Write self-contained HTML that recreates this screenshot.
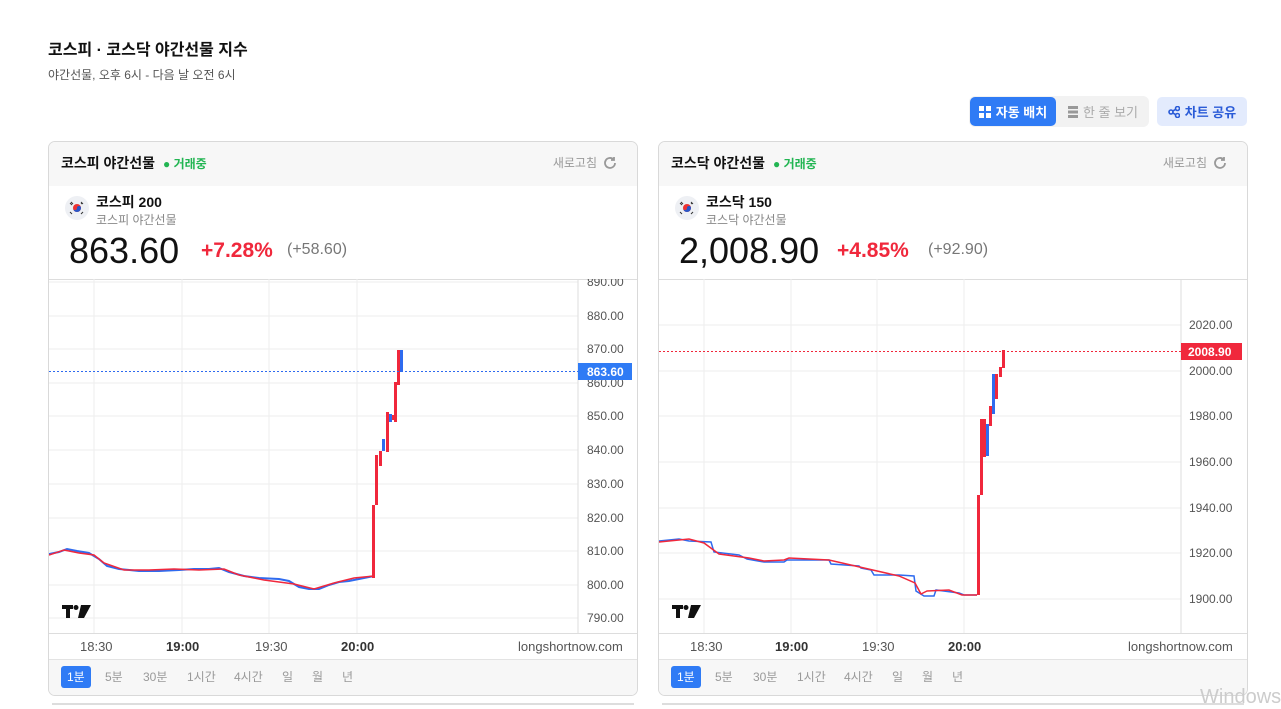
<!DOCTYPE html>
<html><head><meta charset="utf-8">
<style>
*{box-sizing:border-box;margin:0;padding:0}
body{width:1281px;height:705px;overflow:hidden;background:#fff;font-family:"Liberation Sans","Noto Sans CJK KR",sans-serif;position:relative;color:#111}
.abs{position:absolute}
h1{position:absolute;left:48px;top:36px;font-size:16px;font-weight:700}
.sub{left:48px;top:66px;font-size:12px;color:#555}
.btn{position:absolute;top:97px;height:29px;border-radius:5px;font-size:13px;display:flex;align-items:center;justify-content:center;gap:5px}
.card{position:absolute;top:141px;width:590px;height:555px;border:1px solid #d9d9d9;border-radius:7px;overflow:hidden;background:#fff}
.hd{position:absolute;left:0;top:0;right:0;height:44px;background:#f7f7f7}
.hd .t{position:absolute;left:12px;top:11px;font-size:14px;font-weight:700}
.hd .g{position:absolute;top:13px;font-size:12px;color:#22b552;font-weight:700}
.hd .r{position:absolute;right:20px;top:12px;font-size:12px;color:#999;display:flex;gap:6px;align-items:center}
.flag{position:absolute;left:16px;top:54px;width:24px;height:24px;border-radius:50%;background:#eef0f4}
.nm{position:absolute;left:47px;top:50px;font-size:14px;font-weight:700}
.nm2{position:absolute;left:47px;top:69px;font-size:12px;color:#888}
.big{position:absolute;left:20px;top:88px;font-size:36px;color:#111}
.pct{position:absolute;top:97px;font-size:21px;color:#f0283c;font-weight:700}
.chg{position:absolute;top:99px;font-size:16px;color:#777}
.tabs{position:absolute;left:0;right:0;bottom:0;height:36px;background:#f7f7f7;border-top:1px solid #e3e3e3}
.tab{position:absolute;top:6px;height:22px;font-size:12px;color:#999;line-height:22px}
.tab.on{background:#2f7bf5;color:#fff;border-radius:3px;padding:0 6px;left:12px}
svg text{font-family:"Liberation Sans",sans-serif}
</style></head><body>
<h1>코스피 · 코스닥 야간선물 지수</h1>
<div class="abs sub">야간선물, 오후 6시 - 다음 날 오전 6시</div>
<div class="abs" style="left:969px;top:96px;width:180px;height:31px;background:#f2f2f2;border-radius:6px"></div>
<div class="btn" style="left:970px;width:86px;background:#2f7bf5;color:#fff;font-weight:700"><svg width="12" height="12"><rect x="0" y="0" width="5" height="5" fill="#fff"/><rect x="7" y="0" width="5" height="5" fill="#fff"/><rect x="0" y="7" width="5" height="5" fill="#fff"/><rect x="7" y="7" width="5" height="5" fill="#fff"/></svg>자동 배치</div>
<div class="btn" style="left:1060px;width:86px;color:#aaa"><svg width="10" height="12"><rect y="0" width="10" height="3" fill="#999"/><rect y="4.5" width="10" height="3" fill="#999"/><rect y="9" width="10" height="3" fill="#999"/></svg>한 줄 보기</div>
<div class="btn" style="left:1157px;width:90px;background:#e3ebfd;color:#2a5bd7;font-weight:700"><svg width="12" height="12" fill="none" stroke="#2a5bd7" stroke-width="1.6"><circle cx="3" cy="6" r="2"/><circle cx="9.5" cy="2.5" r="2"/><circle cx="9.5" cy="9.5" r="2"/><path d="M4.8 5 7.8 3.3M4.8 7 7.8 8.7"/></svg>차트 공유</div>

<!-- LEFT CARD -->
<div class="card" style="left:48px">
 <div class="hd"><span class="t">코스피 야간선물</span><span class="g" style="left:114px">● 거래중</span><span class="r">새로고침 <svg width="14" height="14" fill="none" stroke="#999" stroke-width="1.8"><path d="M12 7a5 5 0 1 1-1.5-3.6"/><path d="M11 1v3h-3"/></svg></span></div>
 <div class="flag"><svg width="24" height="24"><circle cx="12" cy="12" r="4" fill="#e33"/><path d="M8 12a4 4 0 0 0 8 0a2 2 0 0 0-4 0a2 2 0 0 1-4 0" fill="#2856c8"/><g stroke="#333" stroke-width="1"><path d="M5 8l2-2M6 9l2-2M16 6l2 2M17 7l-1 1M5 16l2 2M16 18l2-2"/></g></svg></div>
 <div class="nm">코스피 200</div><div class="nm2">코스피 야간선물</div>
 <div class="big">863.60</div><div class="pct" style="left:152px">+7.28%</div><div class="chg" style="left:238px">(+58.60)</div>
 <svg class="abs" style="left:0;top:137px" width="590" height="383">
  <line x1="0" y1="0.5" x2="590" y2="0.5" stroke="#ddd"/>
  <g stroke="#eee"><line x1="45" y1="0" x2="45" y2="354"/><line x1="133" y1="0" x2="133" y2="354"/><line x1="220" y1="0" x2="220" y2="354"/><line x1="308" y1="0" x2="308" y2="354"/>
  <line x1="0" y1="3" x2="529" y2="3"/><line x1="0" y1="37" x2="529" y2="37"/><line x1="0" y1="70" x2="529" y2="70"/><line x1="0" y1="104" x2="529" y2="104"/><line x1="0" y1="137" x2="529" y2="137"/><line x1="0" y1="171" x2="529" y2="171"/><line x1="0" y1="205" x2="529" y2="205"/><line x1="0" y1="239" x2="529" y2="239"/><line x1="0" y1="272" x2="529" y2="272"/><line x1="0" y1="306" x2="529" y2="306"/><line x1="0" y1="339" x2="529" y2="339"/></g>
  <line x1="529" y1="0" x2="529" y2="354" stroke="#ddd"/><line x1="0" y1="354.5" x2="590" y2="354.5" stroke="#ddd"/>
  <g font-size="12" fill="#555"><text x="538" y="7">890.00</text><text x="538" y="41">880.00</text><text x="538" y="74">870.00</text><text x="538" y="108">860.00</text><text x="538" y="141">850.00</text><text x="538" y="175">840.00</text><text x="538" y="209">830.00</text><text x="538" y="243">820.00</text><text x="538" y="276">810.00</text><text x="538" y="310">800.00</text><text x="538" y="343">790.00</text></g>
  <polyline fill="none" stroke="#2f6bef" stroke-width="2" points="0,275 10,273 18,270 28,272 40,274 50,280 58,287 70,290 90,292 110,292 130,291 145,290 160,290 170,289 180,293 195,297 210,299 230,300 240,302 250,308 260,310 270,310 280,306 290,303 300,302 310,300 320,298 325,297"/>
  <polyline fill="none" stroke="#f0283c" stroke-width="1.5" points="0,276 15,271 30,274 45,276 55,284 75,291 100,291 125,290 150,291 175,290 190,296 215,301 245,305 265,310 285,304 305,299 325,297"/>
  <rect x="323" y="226" width="3" height="73" fill="#f0283c"/><rect x="326" y="176" width="3" height="50" fill="#f0283c"/><rect x="330" y="172" width="3" height="15" fill="#f0283c"/><rect x="333" y="160" width="3" height="12" fill="#2f6bef"/><rect x="337" y="133" width="3" height="40" fill="#f0283c"/><rect x="340" y="135" width="3" height="8" fill="#2f6bef"/><rect x="343" y="136" width="3" height="5" fill="#f0283c"/><rect x="345" y="103" width="3" height="40" fill="#f0283c"/><rect x="348" y="71" width="3" height="35" fill="#f0283c"/><rect x="351" y="71" width="3" height="22" fill="#2f6bef"/>
  <line x1="0" y1="92.5" x2="529" y2="92.5" stroke="#2f6bef" stroke-dasharray="2 2"/>
  <rect x="529" y="84" width="54" height="17" fill="#2f7bf5"/><text x="538" y="97" font-size="12" fill="#fff" font-weight="700">863.60</text>
  <g transform="translate(13,326)" fill="#111"><rect x="0" y="0" width="11" height="4"/><rect x="4" y="0" width="4" height="13"/><circle cx="14" cy="2.5" r="2.5"/><path d="M19 0h10l-7 13h-6z"/></g>
  <g font-size="13" fill="#555"><text x="31" y="372">18:30</text><text x="117" y="372" font-weight="700" fill="#333">19:00</text><text x="206" y="372">19:30</text><text x="292" y="372" font-weight="700" fill="#333">20:00</text><text x="469" y="372">longshortnow.com</text></g>
  <line x1="0" y1="382.5" x2="590" y2="382.5" stroke="#e3e3e3"/>
 </svg>
 <div class="tabs"><span class="tab on">1분</span><span class="tab" style="left:56px">5분</span><span class="tab" style="left:94px">30분</span><span class="tab" style="left:138px">1시간</span><span class="tab" style="left:185px">4시간</span><span class="tab" style="left:233px">일</span><span class="tab" style="left:263px">월</span><span class="tab" style="left:293px">년</span></div>
</div>
<div class="abs" style="left:52px;top:703px;width:582px;height:2px;background:#ddd"></div>

<!-- RIGHT CARD -->
<div class="card" style="left:658px">
 <div class="hd"><span class="t">코스닥 야간선물</span><span class="g" style="left:114px">● 거래중</span><span class="r">새로고침 <svg width="14" height="14" fill="none" stroke="#999" stroke-width="1.8"><path d="M12 7a5 5 0 1 1-1.5-3.6"/><path d="M11 1v3h-3"/></svg></span></div>
 <div class="flag"><svg width="24" height="24"><circle cx="12" cy="12" r="4" fill="#e33"/><path d="M8 12a4 4 0 0 0 8 0a2 2 0 0 0-4 0a2 2 0 0 1-4 0" fill="#2856c8"/><g stroke="#333" stroke-width="1"><path d="M5 8l2-2M6 9l2-2M16 6l2 2M17 7l-1 1M5 16l2 2M16 18l2-2"/></g></svg></div>
 <div class="nm">코스닥 150</div><div class="nm2">코스닥 야간선물</div>
 <div class="big">2,008.90</div><div class="pct" style="left:178px">+4.85%</div><div class="chg" style="left:269px">(+92.90)</div>
 <svg class="abs" style="left:0;top:137px" width="590" height="383">
  <line x1="0" y1="0.5" x2="590" y2="0.5" stroke="#ddd"/>
  <g stroke="#eee"><line x1="45" y1="0" x2="45" y2="354"/><line x1="132" y1="0" x2="132" y2="354"/><line x1="218" y1="0" x2="218" y2="354"/><line x1="305" y1="0" x2="305" y2="354"/>
  <line x1="0" y1="46" x2="522" y2="46"/><line x1="0" y1="92" x2="522" y2="92"/><line x1="0" y1="137" x2="522" y2="137"/><line x1="0" y1="183" x2="522" y2="183"/><line x1="0" y1="229" x2="522" y2="229"/><line x1="0" y1="274" x2="522" y2="274"/><line x1="0" y1="320" x2="522" y2="320"/></g>
  <line x1="522" y1="0" x2="522" y2="354" stroke="#ddd"/><line x1="0" y1="354.5" x2="590" y2="354.5" stroke="#ddd"/>
  <g font-size="12" fill="#555"><text x="530" y="50">2020.00</text><text x="530" y="96">2000.00</text><text x="530" y="141">1980.00</text><text x="530" y="187">1960.00</text><text x="530" y="233">1940.00</text><text x="530" y="278">1920.00</text><text x="530" y="324">1900.00</text></g>
  <polyline fill="none" stroke="#2f6bef" stroke-width="1.5" points="0,262 20,260 30,262 52,263 55,273 80,276 88,280 105,283 125,283 128,281 170,281 172,285 200,287 202,289 212,291 215,296 240,296 255,297 257,312 265,317 275,317 277,311 300,314 305,316 318,316"/>
  <polyline fill="none" stroke="#f0283c" stroke-width="1.5" points="0,263 30,260 45,264 60,275 90,279 105,282 125,281 130,279 170,281 205,289 240,297 256,304 262,315 268,312 290,311 303,316 318,316"/>
  <rect x="318" y="216" width="3" height="100" fill="#f0283c"/><rect x="321" y="140" width="3" height="76" fill="#f0283c"/><rect x="324" y="140" width="3" height="38" fill="#f0283c"/><rect x="327" y="145" width="3" height="32" fill="#2f6bef"/><rect x="330" y="127" width="3" height="20" fill="#f0283c"/><rect x="333" y="95" width="3" height="40" fill="#2f6bef"/><rect x="336" y="95" width="3" height="25" fill="#f0283c"/><rect x="340" y="88" width="3" height="10" fill="#f0283c"/><rect x="343" y="71" width="3" height="18" fill="#f0283c"/>
  <line x1="0" y1="72.5" x2="522" y2="72.5" stroke="#f0283c" stroke-dasharray="2 2"/>
  <rect x="522" y="64" width="61" height="17" fill="#f0283c"/><text x="529" y="77" font-size="12" fill="#fff" font-weight="700">2008.90</text>
  <g transform="translate(13,326)" fill="#111"><rect x="0" y="0" width="11" height="4"/><rect x="4" y="0" width="4" height="13"/><circle cx="14" cy="2.5" r="2.5"/><path d="M19 0h10l-7 13h-6z"/></g>
  <g font-size="13" fill="#555"><text x="31" y="372">18:30</text><text x="116" y="372" font-weight="700" fill="#333">19:00</text><text x="203" y="372">19:30</text><text x="289" y="372" font-weight="700" fill="#333">20:00</text><text x="469" y="372">longshortnow.com</text></g>
  <line x1="0" y1="382.5" x2="590" y2="382.5" stroke="#e3e3e3"/>
 </svg>
 <div class="tabs"><span class="tab on">1분</span><span class="tab" style="left:56px">5분</span><span class="tab" style="left:94px">30분</span><span class="tab" style="left:138px">1시간</span><span class="tab" style="left:185px">4시간</span><span class="tab" style="left:233px">일</span><span class="tab" style="left:263px">월</span><span class="tab" style="left:293px">년</span></div>
</div>
<div class="abs" style="left:662px;top:703px;width:582px;height:2px;background:#ddd"></div>
<div class="abs" style="left:1200px;top:686px;font-size:20px;color:#ccc">Windows</div>
</body></html>
